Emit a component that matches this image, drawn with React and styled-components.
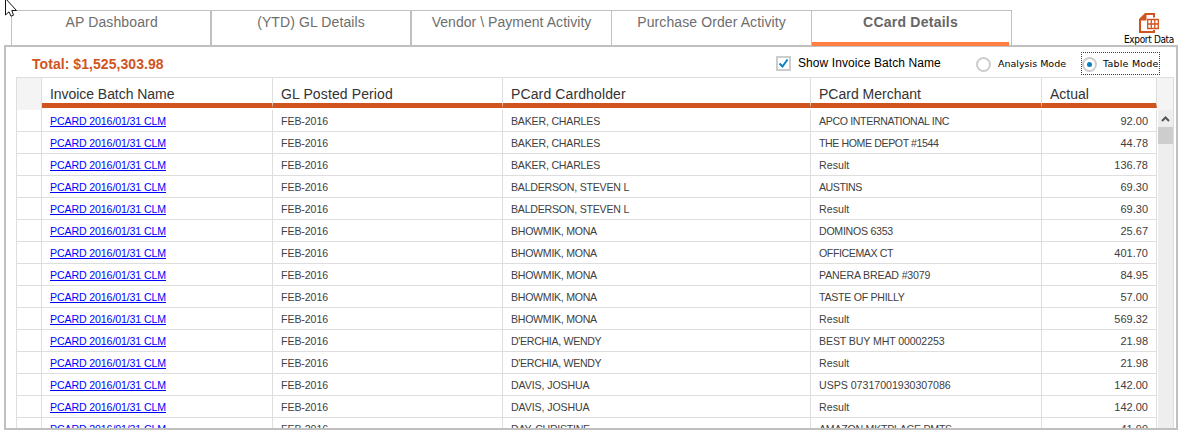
import React from 'react';
import styled, { createGlobalStyle, css } from 'styled-components';

const Global = createGlobalStyle`
  * { box-sizing: border-box; }
  body { margin: 0; background: #fff; font-family: "Liberation Sans", Arial, sans-serif; }
`;

const Page = styled.div`
  position: relative;
  width: 1180px;
  height: 435px;
  overflow: hidden;
  padding: 10px 2px 0 4px;
`;

const TopBar = styled.header`
  display: flex;
  height: 35px;
  padding-left: 7px;
`;

const Tabs = styled.nav`
  display: flex;
  width: 1001px;
  border: 1px solid #c0c0c0;
  border-bottom: 0;
`;

const Tab = styled.div`
  flex: 0 0 ${(p) => p.$width}px;
  height: 34px;
  padding-top: 3px;
  text-align: center;
  font-size: 14px;
  line-height: 16px;
  letter-spacing: ${(p) => p.$spacing || 0}px;
  color: #6e6e6e;
  border-right: ${(p) => p.$divider}px solid #c0c0c0;
  ${(p) => p.$active && css`
    position: relative;
    padding-right: 2px;
    font-weight: bold;
    color: #666;
    &::after {
      content: '';
      position: absolute;
      left: 0;
      right: 2px;
      top: 31px;
      height: 4px;
      background: #ff8042;
    }
  `}
`;

const ExportButton = styled.div`
  display: flex;
  flex-direction: column;
  align-items: center;
  width: 54px;
  margin: 3px 0 0 110px;
  font: 10px/12px "DejaVu Sans Condensed", "DejaVu Sans", sans-serif;
  font-stretch: condensed;
  letter-spacing: -0.35px;
  white-space: nowrap;
  color: #000;
  svg { display: block; flex: none; margin-bottom: 1px; }
`;

const Panel = styled.main`
  width: 1174px;
  height: 385px;
  overflow: hidden;
  border: 2px solid #c0c0c0;
  padding: 0 3px 0 10px;
`;

const Toolbar = styled.div`
  display: flex;
  height: 30px;
`;

const Total = styled.div`
  width: 760px;
  padding: 9px 0 0 16px;
  font-size: 14px;
  line-height: 16px;
  font-weight: bold;
  letter-spacing: 0.06px;
  color: #d1541e;
`;

const CheckField = styled.label`
  display: flex;
  width: 200px;
  padding-top: 9px;
  font-size: 12px;
  line-height: 14px;
  letter-spacing: 0.09px;
  color: #000;
  white-space: nowrap;
`;

const CheckBox = styled.span`
  width: 15px;
  height: 15px;
  margin-right: 7px;
  border: 2px solid #ccc;
  svg { display: block; }
`;

const RadioField = styled.label`
  display: flex;
  width: ${(p) => p.$width}px;
  height: 23px;
  margin-top: 5px;
  padding-top: 5px;
  font: 9.5px/13px "DejaVu Sans", sans-serif;
  letter-spacing: ${(p) => p.$spacing}px;
  color: #000;
  white-space: nowrap;
  ${(p) => p.$focused && css`
    border: 1px dotted #0b4f6c;
    padding-top: 4px;
  `}
`;

const Radio = styled.span`
  display: flex;
  align-items: center;
  justify-content: center;
  flex: none;
  width: 15px;
  height: 15px;
  margin-right: ${(p) => (p.$checked ? 6 : 7)}px;
  border: 2px solid #ccc;
  border-radius: 50%;
  &::after {
    content: '';
    width: 5px;
    height: 5px;
    border-radius: 50%;
    background: ${(p) => (p.$checked ? '#0a7fc2' : 'transparent')};
  }
`;

const Grid = styled.section`
  width: 1158px;
  border: 1px solid #dedede;
  border-bottom: 0;
`;

const columns = '25px 231px 230px 308px 231px 115px 16px';

const HeaderRow = styled.div`
  display: grid;
  grid-template-columns: ${columns};
  height: 32px;
`;

const Gutter = styled.div`
  background: #f4f4f4;
  border-right: ${(p) => (p.$line ? 1 : 0)}px solid #dedede;
`;

const HeaderCell = styled.div`
  height: 30px;
  padding: 8px 0 0 8px;
  font-size: 14px;
  line-height: 16px;
  letter-spacing: ${(p) => p.$spacing || 0}px;
  color: #333;
  white-space: nowrap;
  border-right: 1px solid #dedede;
  border-bottom: 5px solid #d1541e;
`;

const Body = styled.div`
  display: flex;
  height: 320px;
`;

const Rows = styled.div`
  width: 1140px;
  height: 318px;
  overflow: hidden;
`;

const Row = styled.div`
  display: grid;
  grid-template-columns: 25px 231px 230px 308px 231px 115px;
  height: 22px;
`;

const Cell = styled.div`
  height: 22px;
  padding: 5px 8px 0;
  font-size: ${(p) => (p.$numeric ? 11 : 10.6)}px;
  line-height: 13px;
  letter-spacing: ${(p) => p.$spacing || 0}px;
  color: #404040;
  text-align: ${(p) => (p.$numeric ? 'right' : 'left')};
  white-space: nowrap;
  border-right: 1px solid #dedede;
  border-bottom: 1px solid #dedede;
`;

const BatchLink = styled.a`
  color: #0000ff;
  text-decoration: underline;
`;

const ScrollBar = styled.div`
  width: 15px;
  margin-left: 1px;
  background: #eee;
  svg { display: block; }
`;

const Thumb = styled.div`
  height: 17px;
  background: #cdcdcd;
`;

const Pointer = styled.svg`
  position: absolute;
  left: 5px;
  top: 0;
`;

const holderSpacing = {
  'BAKER, CHARLES': -0.2,
  'BALDERSON, STEVEN L': -0.23,
  'BHOWMIK, MONA': -0.28,
  "D'ERCHIA, WENDY": -0.31,
  'DAVIS, JOSHUA': -0.1,
  'DAY, CHRISTINE': -0.27,
};

const rows = [
  ['BAKER, CHARLES', 'APCO INTERNATIONAL INC', '92.00', -0.35],
  ['BAKER, CHARLES', 'THE HOME DEPOT #1544', '44.78', -0.4],
  ['BAKER, CHARLES', 'Result', '136.78', 0.05],
  ['BALDERSON, STEVEN L', 'AUSTINS', '69.30', -0.45],
  ['BALDERSON, STEVEN L', 'Result', '69.30', 0.05],
  ['BHOWMIK, MONA', 'DOMINOS 6353', '25.67', -0.26],
  ['BHOWMIK, MONA', 'OFFICEMAX CT', '401.70', -0.4],
  ['BHOWMIK, MONA', 'PANERA BREAD #3079', '84.95', -0.15],
  ['BHOWMIK, MONA', 'TASTE OF PHILLY', '57.00', -0.27],
  ['BHOWMIK, MONA', 'Result', '569.32', 0.05],
  ["D'ERCHIA, WENDY", 'BEST BUY MHT 00002253', '21.98', -0.11],
  ["D'ERCHIA, WENDY", 'Result', '21.98', 0.05],
  ['DAVIS, JOSHUA', 'USPS 07317001930307086', '142.00', -0.01],
  ['DAVIS, JOSHUA', 'Result', '142.00', 0.05],
  ['DAY, CHRISTINE', 'AMAZON MKTPLACE PMTS', '41.99', -0.24],
];

export default function App() {
  return (
    <Page>
      <Global />
      <TopBar>
        <Tabs>
          <Tab $width={200} $divider={2} $spacing={0.13}>&#8202;AP Dashboard</Tab>
          <Tab $width={200} $divider={2} $spacing={0.1}>(YTD) GL Details</Tab>
          <Tab $width={200} $divider={1} $spacing={0.04}>Vendor \ Payment Activity</Tab>
          <Tab $width={200} $divider={1} $spacing={0.1}>Purchase Order Activity</Tab>
          <Tab $width={199} $divider={0} $spacing={0.24} $active>CCard Details</Tab>
        </Tabs>
        <ExportButton>
          <svg width="20" height="20" viewBox="0 0 20 20" fill="none" stroke="#d1541e">
            <path d="M6 0H16V4.500H14V2H7.500V7.500H2V18H14V17H16V20H0V6z" fill="#d1541e" stroke="none" />
            <path d="M8.700 6.500h10.600v9h-10.600zM12.300 6.500v9M15.800 6.500v9M8.700 11h10.600" strokeWidth="1.300" />
          </svg>
          Export Data
        </ExportButton>
      </TopBar>
      <Panel>
        <Toolbar>
          <Total>Total: $1,525,303.98</Total>
          <CheckField>
            <CheckBox>
              <svg width="11" height="11" viewBox="0 0 11 11" fill="none" stroke="#0a7fc2" strokeWidth="2">
                <path d="M1.500 5.500L4.500 8.500L9.500 1.500" />
              </svg>
            </CheckBox>
            Show Invoice Batch Name
          </CheckField>
          <RadioField $width={105} $spacing={0}><Radio />Analysis Mode</RadioField>
          <RadioField $width={79} $spacing={0.22} $focused><Radio $checked />Table Mode</RadioField>
        </Toolbar>
        <Grid>
          <HeaderRow>
            <Gutter $line />
            <HeaderCell $spacing={-0.05}>Invoice Batch Name</HeaderCell>
            <HeaderCell $spacing={0.12}>GL Posted Period</HeaderCell>
            <HeaderCell $spacing={0.12}>PCard Cardholder</HeaderCell>
            <HeaderCell>PCard Merchant</HeaderCell>
            <HeaderCell>Actual</HeaderCell>
            <Gutter />
          </HeaderRow>
          <Body>
            <Rows>
              {rows.map(([holder, merchant, actual, spacing], i) => (
                <Row key={i}>
                  <Cell />
                  <Cell $spacing={-0.12}><BatchLink>PCARD 2016/01/31 CLM</BatchLink></Cell>
                  <Cell $spacing={-0.08}>FEB-2016</Cell>
                  <Cell $spacing={holderSpacing[holder]}>{holder}</Cell>
                  <Cell $spacing={spacing}>{merchant}</Cell>
                  <Cell $numeric>{actual}</Cell>
                </Row>
              ))}
            </Rows>
            <ScrollBar>
              <svg width="15" height="17" viewBox="0 0 15 17" fill="none" stroke="#555" strokeWidth="2">
                <path d="M4 11L7.500 7.500L11 11" />
              </svg>
              <Thumb />
            </ScrollBar>
          </Body>
        </Grid>
      </Panel>
      <Pointer width="13" height="18" viewBox="0 0 13 18">
        <path d="M.5 -1.500V15L4 11.800L6 16.200L8.500 15.200L6.800 10.500H11.500Z" fill="#fff" stroke="#111" />
      </Pointer>
    </Page>
  );
}
